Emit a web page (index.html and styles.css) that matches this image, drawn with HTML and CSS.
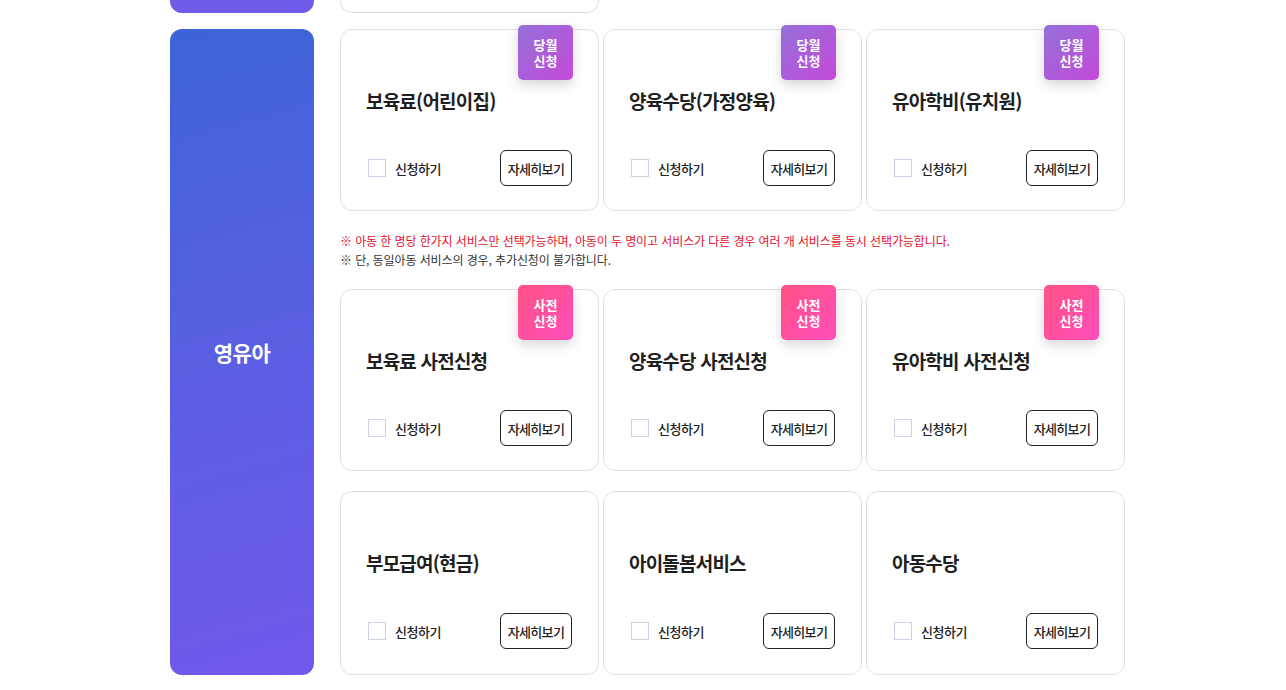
FILE: index.html
```html
<!DOCTYPE html>
<html lang="ko">
<head>
<meta charset="utf-8">
<title>영유아 서비스</title>
<link rel="stylesheet" href="styles.css">
</head>
<body>
<div class="wrap">
  <div class="prev-row">
    <div class="prev-panel"></div>
    <div class="prev-card"></div>
  </div>

  <section class="section">
    <div class="panel">영유아</div>
    <div class="content">
      <div class="grid">
        <div class="card">
          <span class="badge badge-month"><span>당월</span><span>신청</span></span>
          <h3 class="title">보육료(어린이집)</h3>
          <div class="actions">
            <label class="check"><span class="box"></span>신청하기</label>
            <button class="more">자세히보기</button>
          </div>
        </div>
        <div class="card">
          <span class="badge badge-month"><span>당월</span><span>신청</span></span>
          <h3 class="title">양육수당(가정양육)</h3>
          <div class="actions">
            <label class="check"><span class="box"></span>신청하기</label>
            <button class="more">자세히보기</button>
          </div>
        </div>
        <div class="card">
          <span class="badge badge-month"><span>당월</span><span>신청</span></span>
          <h3 class="title">유아학비(유치원)</h3>
          <div class="actions">
            <label class="check"><span class="box"></span>신청하기</label>
            <button class="more">자세히보기</button>
          </div>
        </div>
      </div>

      <div class="notice">
        <p class="red">※ 아동 한 명당 한가지 서비스만 선택가능하며, 아동이 두 명이고 서비스가 다른 경우 여러 개 서비스를 동시 선택가능합니다.</p>
        <p>※ 단, 동일아동 서비스의 경우, 추가신청이 불가합니다.</p>
      </div>

      <div class="grid">
        <div class="card">
          <span class="badge badge-pre"><span>사전</span><span>신청</span></span>
          <h3 class="title">보육료 사전신청</h3>
          <div class="actions">
            <label class="check"><span class="box"></span>신청하기</label>
            <button class="more">자세히보기</button>
          </div>
        </div>
        <div class="card">
          <span class="badge badge-pre"><span>사전</span><span>신청</span></span>
          <h3 class="title">양육수당 사전신청</h3>
          <div class="actions">
            <label class="check"><span class="box"></span>신청하기</label>
            <button class="more">자세히보기</button>
          </div>
        </div>
        <div class="card">
          <span class="badge badge-pre"><span>사전</span><span>신청</span></span>
          <h3 class="title">유아학비 사전신청</h3>
          <div class="actions">
            <label class="check"><span class="box"></span>신청하기</label>
            <button class="more">자세히보기</button>
          </div>
        </div>
      </div>

      <div class="grid grid-last">
        <div class="card">
          <h3 class="title">부모급여(현금)</h3>
          <div class="actions">
            <label class="check"><span class="box"></span>신청하기</label>
            <button class="more">자세히보기</button>
          </div>
        </div>
        <div class="card">
          <h3 class="title">아이돌봄서비스</h3>
          <div class="actions">
            <label class="check"><span class="box"></span>신청하기</label>
            <button class="more">자세히보기</button>
          </div>
        </div>
        <div class="card">
          <h3 class="title">아동수당</h3>
          <div class="actions">
            <label class="check"><span class="box"></span>신청하기</label>
            <button class="more">자세히보기</button>
          </div>
        </div>
      </div>
    </div>
  </section>
</div>
</body>
</html>
```

FILE: styles.css
```css
* { box-sizing: border-box; }

html, body {
  margin: 0;
  padding: 0;
  background: #fff;
  font-family: "Noto Sans CJK KR", "Noto Sans", sans-serif;
  color: #222;
}

.wrap {
  width: 955px;
  margin-left: 170px;
}

.prev-row {
  display: flex;
  gap: 26px;
  height: 13px;
  margin-bottom: 16px;
}

.prev-panel {
  width: 144px;
  height: 13px;
  border-radius: 0 0 12px 12px;
  background: #6f5ce9;
}

.prev-card {
  width: 259px;
  height: 13px;
  border: 1px solid #dfdfe2;
  border-top: none;
  border-radius: 0 0 12px 12px;
}

.section {
  display: flex;
  gap: 26px;
}

.panel {
  width: 144px;
  flex: none;
  border-radius: 12px;
  background: linear-gradient(165deg, #3d63d8 0%, #5a5fe2 50%, #7159eb 100%);
  color: #fff;
  font-size: 21px;
  font-weight: 700;
  display: flex;
  align-items: center;
  justify-content: center;
  letter-spacing: -0.5px;
}

.content {
  flex: 1;
}

.grid {
  display: grid;
  grid-template-columns: repeat(3, 259px);
  column-gap: 4px;
}

.grid + .grid {
  margin-top: 20px;
}

.card {
  position: relative;
  height: 182px;
  border: 1px solid #dfdfe2;
  border-radius: 12px;
  padding: 57px 26px 24px 25px;
  display: flex;
  flex-direction: column;
}

.grid-last .card {
  height: 184px;
  padding-bottom: 25px;
}

.badge {
  position: absolute;
  top: -5px;
  right: 25px;
  width: 55px;
  height: 55px;
  border-radius: 5px;
  color: #fff;
  font-size: 13px;
  font-weight: 600;
  line-height: 16px;
  display: flex;
  flex-direction: column;
  align-items: center;
  justify-content: center;
  text-align: center;
  box-shadow: 0 5px 12px rgba(40, 40, 60, 0.18);
}

.badge span {
  display: block;
  height: 16px;
}

.badge-month {
  background: linear-gradient(135deg, #9470da 0%, #c44ad8 100%);
}

.badge-pre {
  background: linear-gradient(135deg, #ff5283 0%, #ff4dbb 100%);
}

.title {
  margin: 0;
  font-size: 19px;
  font-weight: 700;
  line-height: 28px;
  letter-spacing: -0.8px;
  color: #1f1f1f;
}

.actions {
  margin-top: auto;
  height: 36px;
  display: flex;
  align-items: center;
  justify-content: space-between;
}

.check {
  display: flex;
  align-items: center;
  gap: 9px;
  font-size: 13px;
  font-weight: 500;
  color: #222;
  letter-spacing: -0.5px;
  padding-left: 2px;
}

.box {
  width: 18px;
  height: 18px;
  border: 1px solid #c9d1e3;
  background: #fff;
}

.more {
  width: 72px;
  height: 36px;
  border: 1px solid #222;
  border-radius: 6px;
  background: #fff;
  font-family: inherit;
  font-size: 13px;
  font-weight: 500;
  color: #222;
  letter-spacing: -0.7px;
  padding: 0;
}

.notice {
  margin: 20px 0 20px;
}

.notice p {
  margin: 0;
  font-size: 12px;
  line-height: 19px;
  letter-spacing: -0.1px;
  color: #333;
}

.notice p.red {
  color: #e5102a;
}
```
